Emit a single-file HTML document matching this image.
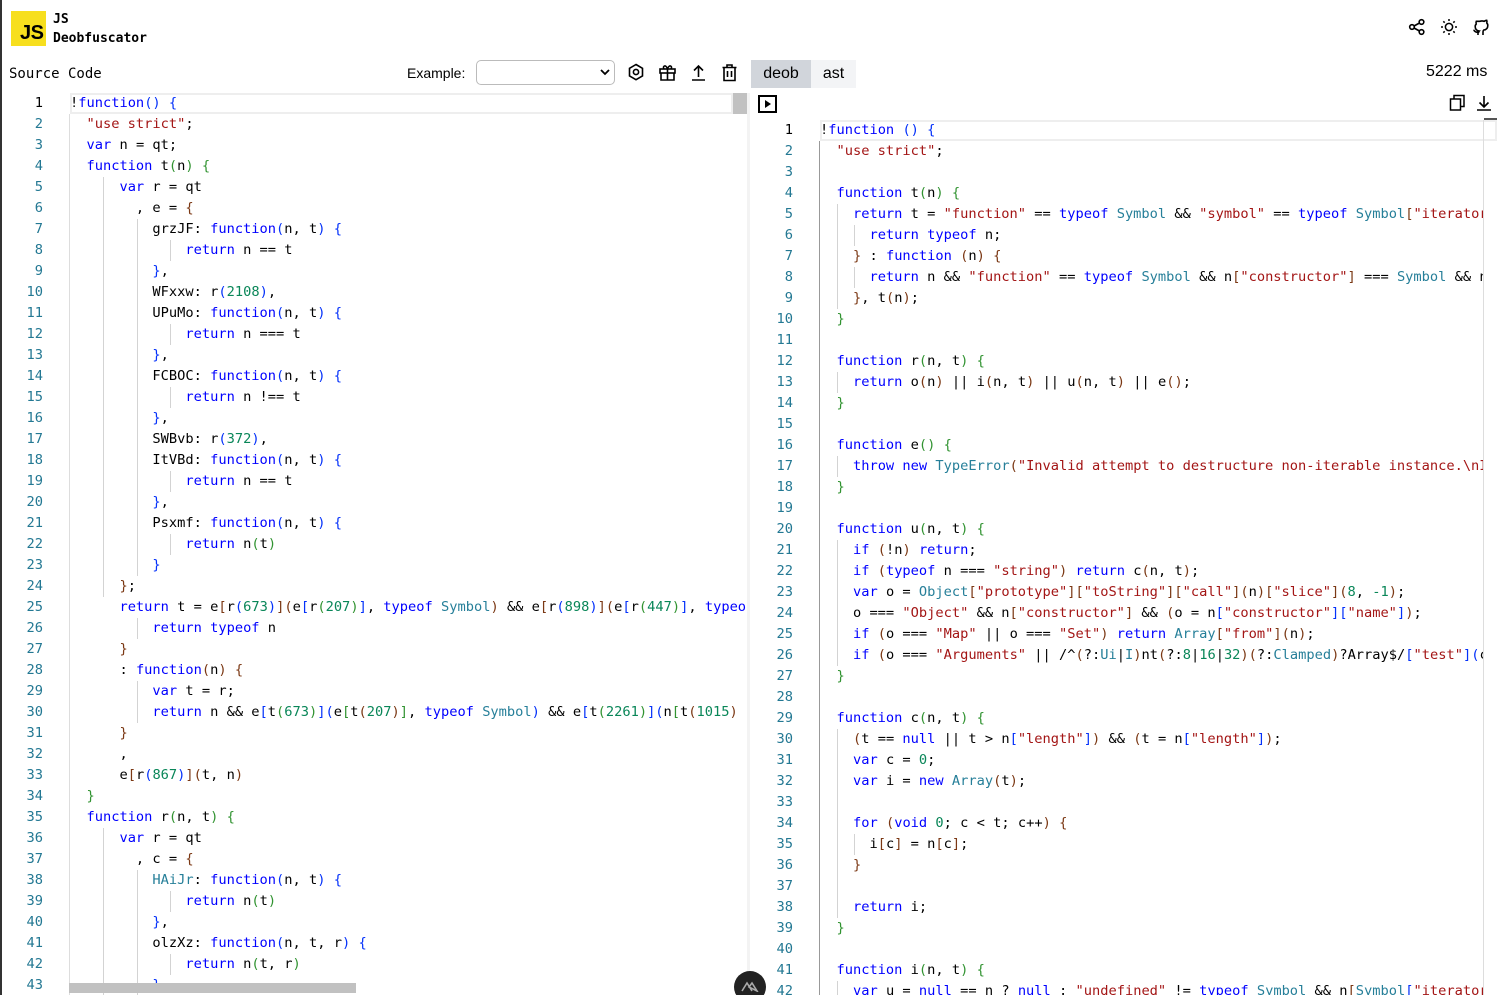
<!DOCTYPE html>
<html><head><meta charset="utf-8">
<style>
*{margin:0;padding:0;box-sizing:border-box}
html,body{width:1497px;height:995px;overflow:hidden;background:#fff}
body{position:relative;font-family:"Liberation Sans",sans-serif}
.mono{font-family:"DejaVu Sans Mono","Liberation Mono",monospace}
.abs{position:absolute}
.code{position:absolute;white-space:pre;font-family:"DejaVu Sans Mono","Liberation Mono",monospace;font-size:13.7px;line-height:21px;color:#000;overflow:hidden}
.ln{position:absolute;text-align:right;font-family:"DejaVu Sans Mono","Liberation Mono",monospace;font-size:13.7px;line-height:21px;color:#237893;white-space:pre}
.k{color:#0000ff}.s{color:#a31515}.n{color:#098658}.t{color:#267f99}.p{color:#7b3814}.g{color:#319331}.b{color:#0431fa}
.guide{position:absolute;width:1px;background:#d3d3d3}
</style></head><body>
<div class="abs" style="left:0;top:0;width:2px;height:995px;background:#333"></div>
<div class="abs" style="left:11px;top:11px;width:35px;height:35px;background:#f7df1e"></div>
<div class="abs" style="left:20px;top:22px;font-weight:bold;font-size:20px;color:#000;letter-spacing:-0.5px">JS</div>
<div class="abs mono" style="left:53px;top:10px;font-size:13px;font-weight:bold;line-height:19px">JS<br>Deobfuscator</div>
<div class="abs mono" style="left:9px;top:66px;font-size:14px">Source Code</div>
<div class="abs" style="left:407px;top:65px;font-size:14px">Example:</div>
<div class="abs" style="left:476px;top:60px;width:139px;height:25px;border:1px solid #bbb;border-radius:5px"></div>
<svg class="abs" style="left:599px;top:67px" width="12" height="10" viewBox="0 0 12 10"><path d="M2 3l4 4 4-4" stroke="#000" stroke-width="1.8" fill="none"/></svg>
<svg class="abs" style="left:627px;top:63px" width="18" height="19" viewBox="0 0 18 19" fill="none" stroke="#000" stroke-width="1.6"><path d="M9 1.5l6.5 3.8v7.6L9 16.7 2.5 12.9V5.3z"/><circle cx="9" cy="9" r="2.6"/></svg>
<svg class="abs" style="left:658px;top:63px" width="19" height="19" viewBox="0 0 19 19" fill="none" stroke="#000" stroke-width="1.6"><rect x="2" y="6" width="15" height="4"/><path d="M3 10v7h13v-7M9.5 6v11M6 6c-2-3 2-5 3.5 0M13 6c2-3-2-5-3.5 0"/></svg>
<svg class="abs" style="left:689px;top:63px" width="19" height="19" viewBox="0 0 19 19" fill="none" stroke="#000" stroke-width="1.6"><path d="M3 17h13M9.5 14V3M5 7.5l4.5-4.5 4.5 4.5"/></svg>
<svg class="abs" style="left:720px;top:63px" width="19" height="19" viewBox="0 0 19 19" fill="none" stroke="#000" stroke-width="1.6"><path d="M2.5 4.5h14M7 4.5V2h5v2.5M4 4.5v13h11v-13M7.5 8v6M11.5 8v6"/></svg>
<div class="abs" style="left:751px;top:60px;width:60px;height:28px;background:#d1d5db;font-size:16px;text-align:center;line-height:28px">deob</div>
<div class="abs" style="left:811px;top:60px;width:45px;height:28px;background:#f3f4f6;font-size:16px;text-align:center;line-height:28px">ast</div>
<div class="abs" style="left:1426px;top:63px;font-size:16px">5222 ms</div>
<svg class="abs" style="left:1408px;top:18px" width="18" height="18" viewBox="0 0 18 18" fill="none" stroke="#000" stroke-width="1.6"><circle cx="4" cy="9" r="2.3"/><circle cx="13.5" cy="4" r="2.3"/><circle cx="13.5" cy="14" r="2.3"/><path d="M6 8l5.5-3M6 10l5.5 3"/></svg>
<svg class="abs" style="left:1440px;top:18px" width="18" height="18" viewBox="0 0 18 18" fill="none" stroke="#000" stroke-width="1.5"><circle cx="9" cy="9" r="3.6"/><path d="M9 1v2M9 15v2M1 9h2M15 9h2M3.3 3.3l1.4 1.4M13.3 13.3l1.4 1.4M3.3 14.7l1.4-1.4M13.3 4.7l1.4-1.4"/></svg>
<svg class="abs" style="left:1472px;top:18px" width="17" height="18" viewBox="0 0 17 18" fill="none" stroke="#000" stroke-width="1.6"><path d="M6 17v-3c-3 .8-3.5-1.5-4.5-2M11 17v-3c0-1 .3-1.6.8-2 2.5-.3 4-1.4 4-4.5 0-1-.3-1.8-1-2.5.3-1 .2-2-.1-2.7 0 0-1 0-2.5 1a8 8 0 0 0-4.4 0C5.3 3.3 4.3 3.3 4.3 3.3c-.3.7-.4 1.7-.1 2.7-.7.7-1 1.5-1 2.5 0 3.1 1.5 4.2 4 4.5-.4.4-.7 1-.7 2"/></svg>

<!-- left editor -->
<div class="abs" style="left:70px;top:93px;width:663px;height:21px;border:2px solid #eee"></div>
<div class="abs" style="left:733px;top:93px;width:14px;height:21px;background:#c1c1c1"></div>
<div class="abs" style="left:69px;top:114px;width:1px;height:881px;background:#ddd"></div>
<div class="abs" style="left:747px;top:93px;width:3px;height:902px;background:#f3f3f3"></div>
<div class="guide" style="left:103px;top:177px;height:420px"></div>
<div class="guide" style="left:137px;top:219px;height:357px"></div>
<div class="guide" style="left:170px;top:240px;height:21px"></div>
<div class="guide" style="left:170px;top:324px;height:21px"></div>
<div class="guide" style="left:170px;top:387px;height:21px"></div>
<div class="guide" style="left:170px;top:471px;height:21px"></div>
<div class="guide" style="left:170px;top:534px;height:21px"></div>
<div class="guide" style="left:137px;top:618px;height:21px"></div>
<div class="guide" style="left:137px;top:681px;height:42px"></div>
<div class="guide" style="left:103px;top:828px;height:167px"></div>
<div class="guide" style="left:137px;top:870px;height:125px"></div>
<div class="guide" style="left:170px;top:891px;height:21px"></div>
<div class="guide" style="left:170px;top:954px;height:21px"></div>
<div class="ln" style="left:0;top:93px;width:43px"><span style="color:#000">1</span>
2
3
4
5
6
7
8
9
10
11
12
13
14
15
16
17
18
19
20
21
22
23
24
25
26
27
28
29
30
31
32
33
34
35
36
37
38
39
40
41
42
43</div>
<div class="code" style="left:70px;top:93px;width:677px;height:902px">!<span class="k">function</span><span class="b">()</span> <span class="b">{</span>
  <span class="s">"use strict"</span>;
  <span class="k">var</span> n = qt;
  <span class="k">function</span> t<span class="g">(</span>n<span class="g">)</span> <span class="g">{</span>
      <span class="k">var</span> r = qt
        , e = <span class="p">{</span>
          grzJF: <span class="k">function</span><span class="b">(</span>n, t<span class="b">)</span> <span class="b">{</span>
              <span class="k">return</span> n == t
          <span class="b">}</span>,
          WFxxw: r<span class="b">(</span><span class="n">2108</span><span class="b">)</span>,
          UPuMo: <span class="k">function</span><span class="b">(</span>n, t<span class="b">)</span> <span class="b">{</span>
              <span class="k">return</span> n === t
          <span class="b">}</span>,
          FCBOC: <span class="k">function</span><span class="b">(</span>n, t<span class="b">)</span> <span class="b">{</span>
              <span class="k">return</span> n !== t
          <span class="b">}</span>,
          SWBvb: r<span class="b">(</span><span class="n">372</span><span class="b">)</span>,
          ItVBd: <span class="k">function</span><span class="b">(</span>n, t<span class="b">)</span> <span class="b">{</span>
              <span class="k">return</span> n == t
          <span class="b">}</span>,
          Psxmf: <span class="k">function</span><span class="b">(</span>n, t<span class="b">)</span> <span class="b">{</span>
              <span class="k">return</span> n<span class="g">(</span>t<span class="g">)</span>
          <span class="b">}</span>
      <span class="p">}</span>;
      <span class="k">return</span> t = e<span class="p">[</span>r<span class="b">(</span><span class="n">673</span><span class="b">)</span><span class="p">](</span>e<span class="b">[</span>r<span class="g">(</span><span class="n">207</span><span class="g">)</span><span class="b">]</span>, <span class="k">typeof</span> <span class="t">Symbol</span><span class="p">)</span> &amp;&amp; e<span class="p">[</span>r<span class="b">(</span><span class="n">898</span><span class="b">)</span><span class="p">](</span>e<span class="b">[</span>r<span class="g">(</span><span class="n">447</span><span class="g">)</span><span class="b">]</span>, <span class="k">typeof</span> Symbol
          <span class="k">return</span> <span class="k">typeof</span> n
      <span class="p">}</span>
      : <span class="k">function</span><span class="p">(</span>n<span class="p">)</span> <span class="p">{</span>
          <span class="k">var</span> t = r;
          <span class="k">return</span> n &amp;&amp; e<span class="b">[</span>t<span class="g">(</span><span class="n">673</span><span class="g">)</span><span class="b">](</span>e<span class="g">[</span>t<span class="p">(</span><span class="n">207</span><span class="p">)</span><span class="g">]</span>, <span class="k">typeof</span> <span class="t">Symbol</span><span class="b">)</span> &amp;&amp; e<span class="b">[</span>t<span class="g">(</span><span class="n">2261</span><span class="g">)</span><span class="b">](</span>n<span class="g">[</span>t<span class="p">(</span><span class="n">1015</span><span class="p">)</span>
      <span class="p">}</span>
      ,
      e<span class="p">[</span>r<span class="b">(</span><span class="n">867</span><span class="b">)</span><span class="p">](</span>t, n<span class="p">)</span>
  <span class="g">}</span>
  <span class="k">function</span> r<span class="g">(</span>n, t<span class="g">)</span> <span class="g">{</span>
      <span class="k">var</span> r = qt
        , c = <span class="p">{</span>
          <span class="t">HAiJr</span>: <span class="k">function</span><span class="b">(</span>n, t<span class="b">)</span> <span class="b">{</span>
              <span class="k">return</span> n<span class="g">(</span>t<span class="g">)</span>
          <span class="b">}</span>,
          olzXz: <span class="k">function</span><span class="b">(</span>n, t, r<span class="b">)</span> <span class="b">{</span>
              <span class="k">return</span> n<span class="g">(</span>t, r<span class="g">)</span>
          <span class="b">}</span>,</div>
<div class="abs" style="left:69px;top:983px;width:287px;height:10px;background:#c1c1c1"></div>
<div class="abs" style="left:734px;top:971px;width:32px;height:32px;border-radius:16px;background:#222"></div>
<svg class="abs" style="left:741px;top:980px" width="18" height="12" viewBox="0 0 18 12" fill="none" stroke="#aaa" stroke-width="1.6"><path d="M1 11L6 3l5 8M8 7l3-4 5 8z"/></svg>

<!-- right editor -->
<div class="abs" style="left:758px;top:95px;width:19px;height:18px;border:2px solid #000"></div>
<svg class="abs" style="left:764px;top:99px" width="8" height="10"><path d="M1 1v8l6-4z" fill="#000"/></svg>
<svg class="abs" style="left:1449px;top:94px" width="17" height="18" viewBox="0 0 17 18" fill="none" stroke="#000" stroke-width="1.5"><rect x="1.5" y="5" width="10" height="11"/><path d="M5 5V1.5h10v11h-3.5"/></svg>
<svg class="abs" style="left:1475px;top:94px" width="18" height="18" viewBox="0 0 18 18" fill="none" stroke="#000" stroke-width="1.6"><path d="M2 16h14M9 2v11M4.5 8.5L9 13l4.5-4.5"/></svg>
<div class="abs" style="left:820px;top:120px;width:677px;height:21px;border:2px solid #eee"></div>
<div class="abs" style="left:819px;top:141px;width:1px;height:854px;background:#999"></div>
<div class="abs" style="left:1483px;top:120px;width:1px;height:875px;background:#ddd"></div>
<div class="abs" style="left:1484px;top:118px;width:13px;height:2px;background:#555"></div>
<div class="guide" style="left:837px;top:204px;height:105px"></div>
<div class="guide" style="left:854px;top:225px;height:21px"></div>
<div class="guide" style="left:854px;top:267px;height:21px"></div>
<div class="guide" style="left:837px;top:372px;height:21px"></div>
<div class="guide" style="left:837px;top:456px;height:21px"></div>
<div class="guide" style="left:837px;top:540px;height:126px"></div>
<div class="guide" style="left:837px;top:729px;height:189px"></div>
<div class="guide" style="left:854px;top:834px;height:21px"></div>
<div class="guide" style="left:837px;top:981px;height:14px"></div>
<div class="ln" style="left:760px;top:120px;width:33px"><span style="color:#000">1</span>
2
3
4
5
6
7
8
9
10
11
12
13
14
15
16
17
18
19
20
21
22
23
24
25
26
27
28
29
30
31
32
33
34
35
36
37
38
39
40
41
42</div>
<div class="code" style="left:820px;top:120px;width:663px;height:875px">!<span class="k">function</span> <span class="b">()</span> <span class="b">{</span>
  <span class="s">"use strict"</span>;

  <span class="k">function</span> t<span class="g">(</span>n<span class="g">)</span> <span class="g">{</span>
    <span class="k">return</span> t = <span class="s">"function"</span> == <span class="k">typeof</span> <span class="t">Symbol</span> &amp;&amp; <span class="s">"symbol"</span> == <span class="k">typeof</span> <span class="t">Symbol</span><span class="p">[</span><span class="s">"iterator"</span>
      <span class="k">return</span> <span class="k">typeof</span> n;
    <span class="p">}</span> : <span class="k">function</span> <span class="p">(</span>n<span class="p">)</span> <span class="p">{</span>
      <span class="k">return</span> n &amp;&amp; <span class="s">"function"</span> == <span class="k">typeof</span> <span class="t">Symbol</span> &amp;&amp; n<span class="p">[</span><span class="s">"constructor"</span><span class="p">]</span> === <span class="t">Symbol</span> &amp;&amp; n
    <span class="p">}</span>, t<span class="p">(</span>n<span class="p">)</span>;
  <span class="g">}</span>

  <span class="k">function</span> r<span class="g">(</span>n, t<span class="g">)</span> <span class="g">{</span>
    <span class="k">return</span> o<span class="p">(</span>n<span class="p">)</span> || i<span class="p">(</span>n, t<span class="p">)</span> || u<span class="p">(</span>n, t<span class="p">)</span> || e<span class="p">()</span>;
  <span class="g">}</span>

  <span class="k">function</span> e<span class="g">()</span> <span class="g">{</span>
    <span class="k">throw</span> <span class="k">new</span> <span class="t">TypeError</span><span class="p">(</span><span class="s">"Invalid attempt to destructure non-iterable instance.\nIn</span>
  <span class="g">}</span>

  <span class="k">function</span> u<span class="g">(</span>n, t<span class="g">)</span> <span class="g">{</span>
    <span class="k">if</span> <span class="p">(</span>!n<span class="p">)</span> <span class="k">return</span>;
    <span class="k">if</span> <span class="p">(</span><span class="k">typeof</span> n === <span class="s">"string"</span><span class="p">)</span> <span class="k">return</span> c<span class="p">(</span>n, t<span class="p">)</span>;
    <span class="k">var</span> o = <span class="t">Object</span><span class="p">[</span><span class="s">"prototype"</span><span class="p">][</span><span class="s">"toString"</span><span class="p">][</span><span class="s">"call"</span><span class="p">](</span>n<span class="p">)[</span><span class="s">"slice"</span><span class="p">](</span><span class="n">8</span>, <span class="n">-1</span><span class="p">)</span>;
    o === <span class="s">"Object"</span> &amp;&amp; n<span class="p">[</span><span class="s">"constructor"</span><span class="p">]</span> &amp;&amp; <span class="p">(</span>o = n<span class="b">[</span><span class="s">"constructor"</span><span class="b">][</span><span class="s">"name"</span><span class="b">]</span><span class="p">)</span>;
    <span class="k">if</span> <span class="p">(</span>o === <span class="s">"Map"</span> || o === <span class="s">"Set"</span><span class="p">)</span> <span class="k">return</span> <span class="t">Array</span><span class="p">[</span><span class="s">"from"</span><span class="p">](</span>n<span class="p">)</span>;
    <span class="k">if</span> <span class="p">(</span>o === <span class="s">"Arguments"</span> || /^<span class="p">(</span>?:<span class="t">Ui</span>|<span class="t">I</span><span class="p">)</span>nt<span class="p">(</span>?:<span class="n">8</span>|<span class="n">16</span>|<span class="n">32</span><span class="p">)(</span>?:<span class="t">Clamped</span><span class="p">)</span>?Array$/<span class="b">[</span><span class="s">"test"</span><span class="b">](</span>c
  <span class="g">}</span>

  <span class="k">function</span> c<span class="g">(</span>n, t<span class="g">)</span> <span class="g">{</span>
    <span class="p">(</span>t == <span class="k">null</span> || t &gt; n<span class="b">[</span><span class="s">"length"</span><span class="b">]</span><span class="p">)</span> &amp;&amp; <span class="p">(</span>t = n<span class="b">[</span><span class="s">"length"</span><span class="b">]</span><span class="p">)</span>;
    <span class="k">var</span> c = <span class="n">0</span>;
    <span class="k">var</span> i = <span class="k">new</span> <span class="t">Array</span><span class="p">(</span>t<span class="p">)</span>;

    <span class="k">for</span> <span class="p">(</span><span class="k">void</span> <span class="n">0</span>; c &lt; t; c++<span class="p">)</span> <span class="p">{</span>
      i<span class="p">[</span>c<span class="p">]</span> = n<span class="p">[</span>c<span class="p">]</span>;
    <span class="p">}</span>

    <span class="k">return</span> i;
  <span class="g">}</span>

  <span class="k">function</span> i<span class="g">(</span>n, t<span class="g">)</span> <span class="g">{</span>
    <span class="k">var</span> u = <span class="k">null</span> == n ? <span class="k">null</span> : <span class="s">"undefined"</span> != <span class="k">typeof</span> <span class="t">Symbol</span> &amp;&amp; n<span class="p">[</span><span class="t">Symbol</span><span class="b">[</span><span class="s">"iterator"</span></div>
</body></html>
